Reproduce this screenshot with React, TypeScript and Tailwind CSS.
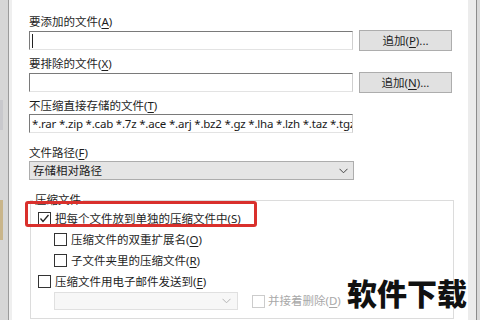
import React from "react"

const font = "font-['Noto_Sans','Noto_Sans_CJK_SC',sans-serif]"

function Key({ k }: { k: string }) {
  return (
    <>
      (<span className="underline underline-offset-2">{k}</span>)
    </>
  )
}

function Label({ text, k, className = "" }: { text: string; k: string; className?: string }) {
  return (
    <div className={`flex h-[17px] items-center text-[11.5px] leading-none text-[#1e1e1e] ${className}`}>
      {text}
      <Key k={k} />
    </div>
  )
}

function TextBox({ children, caret }: { children?: React.ReactNode; caret?: boolean }) {
  return (
    <div className="flex h-[19px] w-[324px] items-center overflow-hidden whitespace-nowrap border border-t-[#7a7a7a] border-l-[#7a7a7a] border-b-[#e3e3e3] border-r-[#cfcfcf] bg-white pl-[2px] text-[11.5px] tracking-[-0.2px] text-[#1a1a1a]">
      {caret && <span className="h-[14px] w-px bg-[#222]" />}
      {children}
    </div>
  )
}

function Button({ text, k }: { text: string; k: string }) {
  return (
    <div className="ml-[6px] flex h-[21px] w-[93px] items-center justify-center border border-[#adadad] bg-[#e1e1e1] text-[11.5px] leading-none text-[#1e1e1e]">
      {text}
      <Key k={k} />
      ...
    </div>
  )
}

function Check({ checked, disabled }: { checked?: boolean; disabled?: boolean }) {
  return (
    <span
      className={`flex h-[13px] w-[13px] shrink-0 items-center justify-center border bg-white ${
        disabled ? "border-[#cccccc]" : "border-[#333333]"
      }`}
    >
      {checked && (
        <svg width="11" height="11" viewBox="0 0 11 11">
          <polyline points="1.5,5.5 4,8.5 9.5,2" fill="none" stroke="#222" strokeWidth="1.3" />
        </svg>
      )}
    </span>
  )
}

function Chevron({ color = "#444" }: { color?: string }) {
  return (
    <svg width="9" height="6" viewBox="0 0 9 6">
      <polyline points="0.5,0.8 4.5,4.8 8.5,0.8" fill="none" stroke={color} strokeWidth="1" />
    </svg>
  )
}

function CheckRow({ text, k, checked, indent }: { text: string; k: string; checked?: boolean; indent?: boolean }) {
  return (
    <div className={`flex h-[21px] items-center gap-[4px] text-[11.5px] leading-none text-[#1e1e1e] ${indent ? "pl-[16px]" : ""}`}>
      <Check checked={checked} />
      <span>
        {text}
        <Key k={k} />
      </span>
    </div>
  )
}

export default function App() {
  return (
    <div className={`relative flex h-[320px] w-[480px] overflow-hidden bg-white ${font}`}>
      {/* 左侧背景窗口 */}
      <div className="flex w-[8px] flex-col bg-[#d6d6d6]">
        <div className="mt-[100px] h-[30px] w-[3px] bg-[#c8c8cc]" />
        <div className="mt-[70px] h-[40px] w-[3px] bg-[#c9b58a]" />
      </div>
      <div className="w-px bg-[#9b9b9b]" />
      <div className="w-[3px] bg-[#efefef]" />

      {/* 对话框内容 */}
      <div className="w-[456px] pl-[17px] pt-[13px]">
        <Label text="要添加的文件" k="A" />
        <div className="flex items-center">
          <TextBox caret />
          <Button text="追加" k="P" />
        </div>

        <Label text="要排除的文件" k="X" className="mt-[4px]" />
        <div className="flex items-center">
          <TextBox />
          <Button text="追加" k="N" />
        </div>

        <Label text="不压缩直接存储的文件" k="T" className="mt-[4px]" />
        <TextBox>*.rar *.zip *.cab *.7z *.ace *.arj *.bz2 *.gz *.lha *.lzh *.taz *.tgz</TextBox>

        <Label text="文件路径" k="F" className="mt-[11px]" />
        <div className="flex h-[19px] w-[325px] items-center justify-between border border-[#adadad] bg-[#e5e5e5] pl-[3px] pr-[5px] text-[11.5px] text-[#1a1a1a]">
          <span>存储相对路径</span>
          <Chevron />
        </div>

        {/* 压缩文件 */}
        <fieldset className="ml-[1px] mt-[12px] h-[127px] w-[424px] border border-[#dcdcdc] px-0">
          <legend className="ml-[2px] px-[2px] text-[11.5px] leading-[16px] text-[#1e1e1e]">压缩文件</legend>
          <div className="pl-[7px]">
            <CheckRow text="把每个文件放到单独的压缩文件中" k="S" checked />
            <CheckRow text="压缩文件的双重扩展名" k="O" indent />
            <CheckRow text="子文件夹里的压缩文件" k="R" indent />
            <CheckRow text="压缩文件用电子邮件发送到" k="E" />
            <div className="flex h-[18px] items-center pl-[16px]">
              <div className="flex h-[18px] w-[184px] items-center justify-end border border-[#e0e0e0] bg-[#f7f7f7] pr-[6px]">
                <Chevron color="#b5b5b5" />
              </div>
              <div className="ml-[14px] flex items-center gap-[3px] text-[11.5px] leading-none text-[#a8a8a8]">
                <Check disabled />
                <span>
                  并接着删除
                  <Key k="D" />
                </span>
              </div>
            </div>
          </div>
        </fieldset>
      </div>

      <div className="w-[8px] bg-[#ececec]" />
      <div className="w-px bg-[#8c8c8c]" />
      <div className="w-[3px] bg-[#d9d9d9]" />

      {/* 红色标注框 */}
      <div className="absolute left-[25px] top-[201px] h-[26px] w-[232px] rounded-[3px] border-[3px] border-[#d9302c]" />

      {/* 水印 */}
      <div className="absolute left-[347px] top-[274px] font-['Noto_Sans_CJK_SC',sans-serif] text-[30px] font-black leading-[36px] text-[#111]">
        软件下载
      </div>
    </div>
  )
}
